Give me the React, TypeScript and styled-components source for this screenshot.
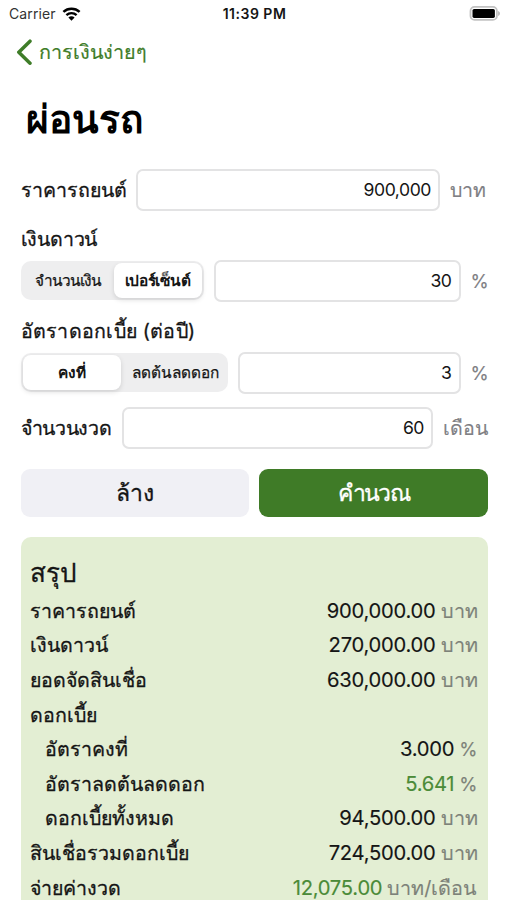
import React from "react";
import styled, { createGlobalStyle } from "styled-components";

const GlobalStyle = createGlobalStyle`
  * { box-sizing: border-box; }
  body { margin: 0; background: #fff; overflow: hidden; }
`;

const Screen = styled.main`
  width: 507px;
  height: 900px;
  overflow: hidden;
  background: #fff;
  color: #151515;
  font-family: Inter, "Liberation Sans", sans-serif;
  font-size: 19.6px;
  white-space: nowrap;
`;

const StatusBar = styled.header`
  display: grid;
  grid-template-columns: 1fr auto 1fr;
  align-items: center;
  height: 28px;
  padding: 0 7px 0 9px;
  font-size: 14px;
  line-height: 28px;
`;

const Carrier = styled.div`
  display: flex;
  align-items: center;
  gap: 6px;
  height: 26px;
  letter-spacing: 0.1px;
  color: #333;
`;

const Clock = styled.div`
  height: 28px;
  line-height: 27px;
  font-size: 14px;
  font-weight: 600;
  letter-spacing: 0.5px;
`;

const Battery = styled.svg`
  justify-self: end;
  margin-top: -2px;
`;

const BackLink = styled.nav`
  display: flex;
  align-items: center;
  gap: 6px;
  height: 48px;
  padding-left: 16px;
  color: #3f7d29;
  line-height: 48px;
  font-size: 19.8px;
  letter-spacing: -0.1px;
  -webkit-text-stroke: 0.2px;
`;

const Title = styled.h1`
  margin: 0;
  height: 92.5px;
  padding-left: 26px;
  font-size: 38.8px;
  line-height: 86px;
  font-weight: 700;
  color: #000;
`;

const Form = styled.section`
  display: flex;
  flex-direction: column;
  padding: 0 19.5px 0 20.5px;
`;

const Field = styled.div<{ $after: number }>`
  display: flex;
  align-items: center;
  height: 42px;
  gap: 10px;
  margin-bottom: ${(p) => p.$after}px;
`;

const Label = styled.label<{ $width: number; $tracking?: number }>`
  flex: none;
  width: ${(p) => p.$width}px;
  line-height: 42px;
  letter-spacing: ${(p) => p.$tracking ?? 0}px;
  -webkit-text-stroke: 0.3px;
`;

const GroupLabel = styled.div<{ $tracking?: number }>`
  height: 49px;
  line-height: 57px;
  letter-spacing: ${(p) => p.$tracking ?? 0}px;
  -webkit-text-stroke: 0.3px;
`;

const Input = styled.div`
  flex: 1;
  height: 42px;
  padding-right: 7px;
  border: 2px solid #e3e3e4;
  border-radius: 7px;
  font-size: 17.6px;
  line-height: 37px;
  text-align: right;
  letter-spacing: -0.45px;
`;

const Suffix = styled.span<{ $width: number; $small?: boolean }>`
  flex: none;
  width: ${(p) => p.$width}px;
  font-size: ${(p) => (p.$small ? 18.5 : 19.6)}px;
  line-height: 42px;
  color: #808084;
  -webkit-text-stroke: 0.15px;
`;

const Segments = styled.div<{ $width: number }>`
  display: flex;
  flex: none;
  width: ${(p) => p.$width}px;
  height: 39px;
  padding: 2px;
  border-radius: 10px;
  background: #eeeeef;
`;

const Segment = styled.div<{ $width: number; $selected?: boolean; $tracking?: number }>`
  flex: none;
  width: ${(p) => p.$width}px;
  height: 35px;
  border-radius: 8px;
  background: ${(p) => (p.$selected ? "#fff" : "transparent")};
  box-shadow: ${(p) => (p.$selected ? "0 2px 5px rgba(0,0,0,.13)" : "none")};
  font-size: 15.4px;
  font-weight: ${(p) => (p.$selected ? 600 : 400)};
  -webkit-text-stroke: ${(p) => (p.$selected ? 0 : 0.25)}px;
  letter-spacing: ${(p) => p.$tracking ?? 0}px;
  line-height: 36px;
  text-align: center;
`;

const Actions = styled.div`
  display: grid;
  grid-template-columns: 1fr 1fr;
  gap: 10px;
  margin-bottom: 20px;
`;

const Button = styled.button<{ $primary?: boolean }>`
  height: 48.5px;
  padding: 0;
  border: 0;
  border-radius: 9px;
  background: ${(p) => (p.$primary ? "#3f7b27" : "#f0f0f5")};
  color: ${(p) => (p.$primary ? "#fff" : "#151515")};
  font-family: inherit;
  font-size: 23px;
  line-height: 46px;
  letter-spacing: ${(p) => (p.$primary ? -1.7 : -0.3)}px;
  -webkit-text-stroke: 0.3px;
`;

const Summary = styled.section`
  height: 400px;
  padding: 14px 10px 0 9.5px;
  border-radius: 10px;
  background: #e3eed3;
`;

const SummaryTitle = styled.h2`
  margin: 0;
  height: 42.9px;
  line-height: 43px;
  font-size: 26px;
  font-weight: 400;
  -webkit-text-stroke: 0.3px;
`;

const SummaryRow = styled.div<{ $indent?: boolean }>`
  display: flex;
  justify-content: space-between;
  height: 34.6px;
  line-height: 34.6px;
  padding-left: ${(p) => (p.$indent ? 15 : 0)}px;
  -webkit-text-stroke: 0.3px;
`;

const Amount = styled.span<{ $accent?: boolean }>`
  display: flex;
  gap: 5px;
  font-size: 20.2px;
  letter-spacing: -0.25px;
  color: ${(p) => (p.$accent ? "#4b8b38" : "#151515")};
  -webkit-text-stroke: 0.15px;
`;

const Unit = styled.span<{ $narrow?: boolean }>`
  font-size: ${(p) => (p.$narrow ? 18.5 : 19.8)}px;
  letter-spacing: 0;
  color: #7d8279;
`;

type Line = { label: string; value?: string; unit?: string; indent?: boolean; accent?: boolean };

const lines: Line[] = [
  { label: "ราคารถยนต์", value: "900,000.00", unit: "บาท" },
  { label: "เงินดาวน์", value: "270,000.00", unit: "บาท" },
  { label: "ยอดจัดสินเชื่อ", value: "630,000.00", unit: "บาท" },
  { label: "ดอกเบี้ย" },
  { label: "อัตราคงที่", value: "3.000", unit: "%", indent: true },
  { label: "อัตราลดต้นลดดอก", value: "5.641", unit: "%", indent: true, accent: true },
  { label: "ดอกเบี้ยทั้งหมด", value: "94,500.00", unit: "บาท", indent: true },
  { label: "สินเชื่อรวมดอกเบี้ย", value: "724,500.00", unit: "บาท" },
  { label: "จ่ายค่างวด", value: "12,075.00", unit: "บาท/เดือน", accent: true },
];

export default function App() {
  return (
    <>
      <GlobalStyle />
      <Screen>
        <StatusBar>
          <Carrier>
            Carrier
            <svg width="19" height="14" viewBox="0 0 19 14">
              <path d="M1.4 4.9C6 .7 13 .7 17.6 4.9" fill="none" stroke="#000" strokeWidth="2.5" />
              <path d="M4.4 8.1c2.9-2.7 7.3-2.7 10.2 0" fill="none" stroke="#000" strokeWidth="2.4" />
              <path d="M9.5 13.7 6.4 10.5c1.7-1.6 4.5-1.6 6.2 0z" fill="#000" />
            </svg>
          </Carrier>
          <Clock>11:39 PM</Clock>
          <Battery width="31" height="15" viewBox="0 0 31 15">
            <rect x="1.5" y="0.9" width="26.4" height="13" rx="4" fill="#fff" stroke="#c2c2c2" strokeWidth="1.8" />
            <rect x="3.5" y="2.9" width="22.4" height="9" rx="1.6" fill="#000" />
            <path d="M29.2 5v5c2.2-.9 2.2-4.1 0-5z" fill="#b0b0b0" />
          </Battery>
        </StatusBar>
        <BackLink>
          <svg width="17" height="26" viewBox="0 0 17 26">
            <path d="M14 2.2 2.8 13.2 14 24.2" fill="none" stroke="currentColor" strokeWidth="3.5" strokeLinecap="round" strokeLinejoin="round" />
          </svg>
          การเงินง่ายๆ
        </BackLink>
        <Title>ผ่อนรถ</Title>
        <Form>
          <Field $after={0}>
            <Label $width={105}>ราคารถยนต์</Label>
            <Input>900,000</Input>
            <Suffix $width={37.5}>บาท</Suffix>
          </Field>
          <GroupLabel $tracking={-0.2}>เงินดาวน์</GroupLabel>
          <Field $after={1}>
            <Segments $width={183}>
              <Segment $width={91} $tracking={-1}>จำนวนเงิน</Segment>
              <Segment $width={88} $selected $tracking={-0.3}>เปอร์เซ็นต์</Segment>
            </Segments>
            <Input>30</Input>
            <Suffix $width={17} $small>%</Suffix>
          </Field>
          <GroupLabel $tracking={0.25}>อัตราดอกเบี้ย (ต่อปี)</GroupLabel>
          <Field $after={13.5}>
            <Segments $width={207.5}>
              <Segment $width={98} $selected>คงที่</Segment>
              <Segment $width={109}>ลดต้นลดดอก</Segment>
            </Segments>
            <Input>3</Input>
            <Suffix $width={17} $small>%</Suffix>
          </Field>
          <Field $after={19.5}>
            <Label $width={91} $tracking={-0.3}>จำนวนงวด</Label>
            <Input>60</Input>
            <Suffix $width={44.5}>เดือน</Suffix>
          </Field>
          <Actions>
            <Button>ล้าง</Button>
            <Button $primary>คำนวณ</Button>
          </Actions>
          <Summary>
            <SummaryTitle>สรุป</SummaryTitle>
            {lines.map((line) => (
              <SummaryRow key={line.label} $indent={line.indent}>
                <span>{line.label}</span>
                {line.value && (
                  <Amount $accent={line.accent}>
                    {line.value}
                    <Unit $narrow={line.unit === "%"}>{line.unit}</Unit>
                  </Amount>
                )}
              </SummaryRow>
            ))}
          </Summary>
        </Form>
      </Screen>
    </>
  );
}
